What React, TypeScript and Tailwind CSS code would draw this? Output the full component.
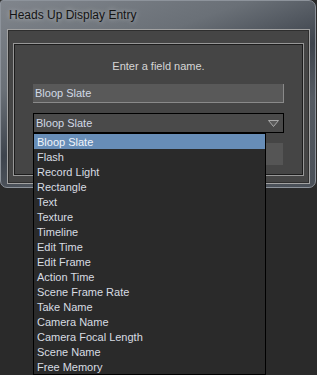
import React from 'react';

const items = [
    'Bloop Slate',
    'Flash',
    'Record Light',
    'Rectangle',
    'Text',
    'Texture',
    'Timeline',
    'Edit Time',
    'Edit Frame',
    'Action Time',
    'Scene Frame Rate',
    'Take Name',
    'Camera Name',
    'Camera Focal Length',
    'Scene Name',
    'Free Memory',
];

const ArrowDown: React.FC = () => (
    <svg width="11" height="7" viewBox="0 0 11 7">
        <path d="M0.5 0.5 L10.5 0.5 L5.5 6.5 Z" fill="#5a5a5a" stroke="#a8a8a8" strokeWidth="1" />
    </svg>
);

export default function App() {
    return (
        <div className="relative w-[317px] h-[375px] overflow-hidden bg-[#2a2a2a] font-['Liberation_Sans',Arial,sans-serif]">
            {/* window */}
            <div className="w-[316px] h-[188px] flex flex-col rounded-tl-[3px] rounded-tr-[7px] rounded-b-[7px] border border-[#8d939b] bg-[linear-gradient(160deg,#80858c_0%,#6a7077_30%,#3e444d_52%,#555b63_70%,#4a5058_100%)]">
                <div className="h-[28px] pl-[8px] flex items-center text-[12px] text-[#141414] [text-shadow:0_0_5px_rgba(255,255,255,0.55)]">
                    Heads Up Display Entry
                </div>
                <div className="ml-[6px] w-[303px] h-[155px] border border-[#a2a2a2] bg-[#454545] shadow-[inset_0_0_0_1px_#2e2e2e] pl-[5px] pt-[13px]">
                    <div className="w-[291px] h-[133px] border border-[#979797] shadow-[inset_0_0_0_1px_#1c1c1c] flex flex-col px-[19px] pt-[15px]">
                        <div className="h-[15px] leading-[15px] text-center text-[11px] text-[#d6d6d6]">Enter a field name.</div>
                        <div className="mt-[10px] h-[19px] flex items-center pl-[2px] bg-[#595959] border-b border-r border-[#8a8a8a] text-[11px] text-[#d2d9e6]">
                            Bloop Slate
                        </div>
                        <div className="mt-[10px] h-[20px] flex items-center justify-between pl-[2px] pr-[4px] bg-[#4a4a4a] border border-black text-[11px] text-[#d2d9e6]">
                            <span>Bloop Slate</span>
                            <ArrowDown />
                        </div>
                        <div className="mt-[10px] flex justify-end gap-[10px] pr-[1px]">
                            <div className="w-[75px] h-[22px] bg-[#555555]" />
                        </div>
                    </div>
                </div>
            </div>

            {/* open dropdown list */}
            <div className="absolute left-[33px] top-[133px] w-[233px] border border-black bg-[#2a2a2a]">
                {items.map((item, i) => (
                    <div
                        key={item}
                        className={
                            i === 0
                                ? 'h-[15px] leading-[14px] pt-[1px] pl-[3px] text-[11px] bg-[#678db7] text-[#f0f4fa]'
                                : 'h-[15px] leading-[14px] pt-[1px] pl-[3px] text-[11px] text-[#d8dce2]'
                        }
                    >
                        {item}
                    </div>
                ))}
            </div>
        </div>
    );
}
